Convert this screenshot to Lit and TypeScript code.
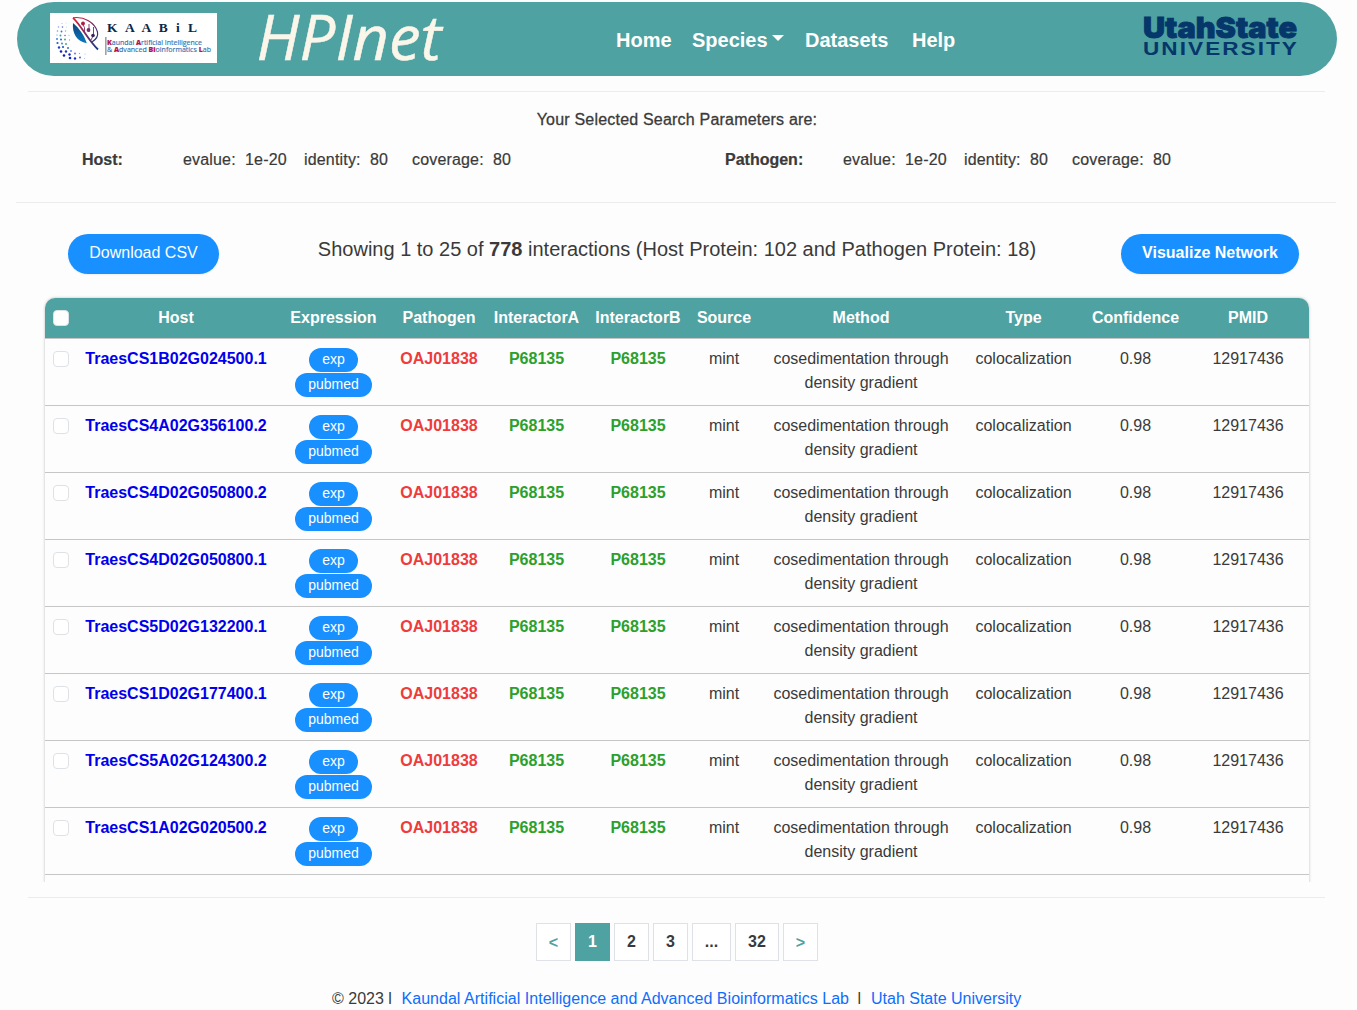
import { LitElement, html, svg, css } from "lit";
import { customElement } from "lit/decorators.js";

const HOSTS = [
  "TraesCS1B02G024500.1",
  "TraesCS4A02G356100.2",
  "TraesCS4D02G050800.2",
  "TraesCS4D02G050800.1",
  "TraesCS5D02G132200.1",
  "TraesCS1D02G177400.1",
  "TraesCS5A02G124300.2",
  "TraesCS1A02G020500.2",
];

const COLUMNS = ["Host", "Expression", "Pathogen", "InteractorA", "InteractorB", "Source", "Method", "Type", "Confidence", "PMID"];

// Dots of the lab emblem: x, y, radius, fill.
const DOTS: [number, number, number, string][] = [
  [12, 10.5, 0.6, "#a9b8ee"], [16, 10, 0.5, "#c3cdf2"], [8.5, 14, 0.8, "#8fa4ea"], [12.5, 14, 0.8, "#4c6ce0"],
  [16.5, 14, 0.5, "#a5d5c8"], [7.5, 18, 0.8, "#5ba7d6"], [11.5, 18.5, 0.9, "#3f6be0"], [15.5, 18, 0.7, "#7fb0dd"],
  [7, 22, 0.7, "#8db4e8"], [10.5, 22.5, 0.9, "#3b9aa8"], [15, 22.5, 0.8, "#4a78d0"], [19, 22.5, 0.6, "#8cc8a0"],
  [7, 26, 0.9, "#2a78d2"], [11, 26.5, 1, "#2c62d8"], [15, 26.5, 0.9, "#3f9a88"], [19.5, 27, 0.7, "#6fc08c"],
  [7.5, 30, 1.1, "#1c5fd0"], [12, 30.5, 1, "#3a8fb0"], [16, 31, 0.9, "#3d9d7c"], [9, 34.5, 1.2, "#1b3fd0"],
  [13, 34, 1.1, "#2553c8"], [18, 35, 1, "#3a6cc0"], [11, 38.5, 1.3, "#1022c4"], [16, 38.5, 1.2, "#1c38c8"],
  [21, 38, 0.9, "#5c7fe0"], [14, 42.5, 1.3, "#0d1cc0"], [19.5, 41.5, 1.2, "#1724b8"], [25, 40.5, 0.9, "#5568d8"],
  [20, 45, 1.3, "#0f22c8"], [25, 45.5, 1.2, "#1c2cc0"], [30, 44.5, 0.9, "#3c4ccc"], [29.5, 40.5, 0.7, "#97a5e8"],
  [35, 41, 0.6, "#a5b0ea"], [34.5, 45.5, 0.5, "#a5b0ea"],
];

@customElement("kaabil-logo")
export class KaabilLogo extends LitElement {
  static styles = css`
    :host { display: block; width: 167px; height: 50px; }
    .art { display: block; }
    .name { font: bold 13.5px "Liberation Serif", serif; fill: #0b2748; }
    .sub { font: 7px "Open Sans", sans-serif; fill: #2c6db0; stroke: #2c6db0; stroke-width: .12; }
    .cap { font-weight: 800; fill: #b3124f; stroke: #b3124f; }
  `;
  render() {
    return html`<svg class="art" width="167" height="50" viewBox="0 0 167 50">
      <defs>
        <linearGradient id="rim" x1="0" y1="0" x2="1" y2="1">
          <stop offset="0" stop-color="#e81b2b" /><stop offset=".5" stop-color="#7a2c62" /><stop offset="1" stop-color="#123c86" />
        </linearGradient>
        <linearGradient id="leaf" x1="0" y1="0" x2="0" y2="1">
          <stop offset="0" stop-color="#12407c" /><stop offset="1" stop-color="#067cc0" />
        </linearGradient>
      </defs>
      <rect width="167" height="50" fill="#fff" />
      ${DOTS.map(([x, y, r, c]) => svg`<circle cx=${x} cy=${y} r=${r} fill=${c} />`)}
      <path d="M23 10C22 20 26.5 28.5 36.8 30.3C34 22 29 15 23 10Z" fill="url(#leaf)" />
      <path d="M23 4.8C34 3 45 10 47.5 19C48.5 24 46 26.5 42 29" fill="none" stroke="url(#rim)" stroke-width="1.2" />
      <path d="M23 4.8C31 12 38 27 48 36.5" fill="none" stroke="url(#rim)" stroke-width="1.8" />
      <path d="M32 10L34.5 14.5V20M39 11V19M43.5 14V22L41 27" fill="none" stroke="#7a2c62" stroke-width=".9" />
      <circle cx="33" cy="10.5" r="1.9" fill="#b01a43" />
      <circle cx="38.5" cy="17" r="1.9" fill="#702e6c" />
      <circle cx="43" cy="22.5" r="1.8" fill="#32265e" />
      <text class="name" x="57" y="19" textLength="90">K A A B i L</text>
      <rect x="55.5" y="24" width=".8" height="18" fill="#3b4656" />
      <text class="sub" x="57" y="32.3" textLength="95" lengthAdjust="spacingAndGlyphs"><tspan class="cap">K</tspan>aundal <tspan class="cap">A</tspan>rtificial Intelligence</text>
      <text class="sub" x="57" y="39.4" textLength="104" lengthAdjust="spacingAndGlyphs">&amp; <tspan class="cap">A</tspan>dvanced <tspan class="cap">Bi</tspan>oinformatics <tspan class="cap">L</tspan>ab</text>
    </svg>`;
  }
}

@customElement("app-root")
export class AppRoot extends LitElement {
  static styles = css`
    :host {
      display: block; box-sizing: border-box; height: 1010px; overflow: hidden; padding-top: 2px;
      background: #fdfdfd; color: #3a3a3a; font: 16px/24px "Liberation Sans", Arial, sans-serif;
    }
    * { box-sizing: border-box; }
    .bar { display: flex; height: 74px; margin: 0 20px 0 17px; padding: 0 39px 0 33px; border-radius: 37px; background: #4fa2a2; }
    .lab { margin-top: 11px; }
    .brand { margin-left: 38px; display: block; overflow: visible; }
    .brand-text { font: italic 400 62px "Open Sans", sans-serif; fill: #fbf6ea; stroke: #fbf6ea; stroke-width: .5; }
    .nav { display: flex; margin: 26px 0 0 166px; color: #fff; font-weight: bold; font-size: 20px; }
    .item { white-space: nowrap; }
    .home { width: 76px; }
    .species { width: 113px; display: flex; }
    .caret { width: 0; height: 0; margin: 7px 0 0 4px; border: 6px solid transparent; border-top-color: #fff; border-bottom: 0; }
    .datasets { width: 107px; }
    .usu { display: block; margin-left: auto; overflow: visible; }
    .usu-top { font: 900 29px Inter, sans-serif; fill: #06376b; stroke: #06376b; stroke-width: .9; }
    .usu-low { font: 700 17.5px "Liberation Sans", sans-serif; fill: #06376b; letter-spacing: 1.6px; }
    .rule { height: 1px; background: #ececec; }
    .r1 { margin: 15px 32px 0 28px; }
    .r2 { margin: 30px 21px 0 16px; }
    .r3 { margin: 15px 32px 0 28px; }
    .title { margin-top: 16px; padding-right: 3px; text-align: center; letter-spacing: .2px; -webkit-text-stroke: .3px #3a3a3a; }
    .params { display: grid; grid-template-columns: 643px 1fr; padding-left: 82px; margin-top: 16px; }
    .group { display: grid; grid-template-columns: 101px 121px 108px auto; white-space: pre; -webkit-text-stroke: .2px #3a3a3a; }
    .group span { letter-spacing: .17px; }
    .group.path { grid-template-columns: 118px 121px 108px auto; }
    .tools { display: flex; justify-content: space-between; align-items: flex-start; padding: 0 58px 0 68px; margin-top: 31px; }
    .btn { height: 40px; border-radius: 20px; background: #1890ff; color: #fff; text-align: center; line-height: 38px; box-shadow: 0 1px 2px #0001; }
    .csv { width: 151px; }
    .viz { width: 178px; font-weight: bold; }
    .showing { font-size: 20px; line-height: 30px; padding-left: 14px; }
    .window { margin: 20px 41px 0; height: 588px; padding: 4px 4px 0; overflow: hidden; }
    .table { height: 620px; margin-right: 3px; border-radius: 10px; box-shadow: 0 0 3px #0004; }
    .row { display: grid; grid-template-columns: 32px 198px 117px 94px 101px 102px 70px 204px 121px 103px 122px; height: 67px; padding-top: 8px; border-bottom: 1px solid #c6c6c6; text-align: center; }
    .head { height: 41px; background: #4fa2a2; color: #fff; font-weight: bold; border-radius: 10px 10px 0 0; }
    .check { width: 16px; height: 16px; margin: 4px 0 0 8px; border: 1px solid #dee2e6; border-radius: 4px; background: #fff; }
    .host { color: #0000ee; font-weight: bold; }
    .pathogen { color: #ee3b3b; font-weight: bold; }
    .inter { color: #2ca02c; font-weight: bold; }
    .badges { display: flex; flex-direction: column; align-items: center; gap: 1px; padding-top: 1px; }
    .badge { height: 24px; border-radius: 12px; background: #1890ff; color: #fff; font-size: 14px; line-height: 22px; width: 77px; }
    .exp { width: 49px; }
    .method { padding: 0 10px; }
    .pages { display: flex; justify-content: center; gap: 4px; margin: 25px 3px 0 0; font-weight: bold; }
    .page { width: 35px; height: 38px; border: 1px solid #dee2e6; background: #fff; text-align: center; line-height: 36px; }
    .arrow { color: #4fa2a2; line-height: 38px; }
    .on { background: #4fa2a2; border-color: #4fa2a2; color: #fff; }
    .dots { width: 39px; }
    .last { width: 44px; }
    .foot { display: flex; margin: 26px 0 0 332px; white-space: pre; }
    .link { color: #0d6efd; }
    .year { width: 69.5px; }
    .lab-link { width: 456px; letter-spacing: .03px; }
    .sep { width: 13.5px; }
  `;

  private group(label: string, cls: string) {
    return html`<div class="group ${cls}"><b>${label}</b><span>evalue:  1e-20</span><span>identity:  80</span><span>coverage:  80</span></div>`;
  }

  render() {
    return html`
      <header class="bar">
        <kaabil-logo class="lab"></kaabil-logo>
        <svg class="brand" width="195" height="74" viewBox="0 0 195 74"><text class="brand-text" x="1.5" y="58" textLength="185" lengthAdjust="spacingAndGlyphs">HPInet</text></svg>
        <nav class="nav">
          <span class="item home">Home</span>
          <span class="item species">Species<i class="caret"></i></span>
          <span class="item datasets">Datasets</span>
          <span class="item">Help</span>
        </nav>
        <svg class="usu" width="156" height="74" viewBox="0 0 156 74">
          <text class="usu-top" x="1" y="36" textLength="154" lengthAdjust="spacingAndGlyphs">UtahState</text>
          <text class="usu-low" x="1" y="52.5" textLength="156" lengthAdjust="spacingAndGlyphs">UNIVERSITY</text>
        </svg>
      </header>
      <div class="rule r1"></div>
      <div class="title">Your Selected Search Parameters are:</div>
      <div class="params">${this.group("Host:", "")}${this.group("Pathogen:", "path")}</div>
      <div class="rule r2"></div>
      <div class="tools">
        <div class="btn csv">Download CSV</div>
        <div class="showing">Showing 1 to 25 of <b>778</b> interactions (Host Protein: 102 and Pathogen Protein: 18)</div>
        <div class="btn viz">Visualize Network</div>
      </div>
      <div class="window"><div class="table">
        <div class="row head"><i class="check"></i>${COLUMNS.map((c) => html`<span>${c}</span>`)}</div>
        ${HOSTS.map((h) => html`<div class="row">
          <i class="check"></i>
          <span class="host">${h}</span>
          <div class="badges"><span class="badge exp">exp</span><span class="badge">pubmed</span></div>
          <span class="pathogen">OAJ01838</span>
          <span class="inter">P68135</span>
          <span class="inter">P68135</span>
          <span>mint</span>
          <span class="method">cosedimentation through density gradient</span>
          <span>colocalization</span>
          <span>0.98</span>
          <span>12917436</span>
        </div>`)}
      </div></div>
      <div class="rule r3"></div>
      <div class="pages">
        <span class="page arrow">&lt;</span><span class="page on">1</span><span class="page">2</span><span class="page">3</span><span class="page dots">...</span><span class="page last">32</span><span class="page arrow">&gt;</span>
      </div>
      <footer class="foot"><span class="year">© 2023 l</span><span class="link lab-link">Kaundal Artificial Intelligence and Advanced Bioinformatics Lab</span><span class="sep">l</span><span class="link">Utah State University</span></footer>
    `;
  }
}
